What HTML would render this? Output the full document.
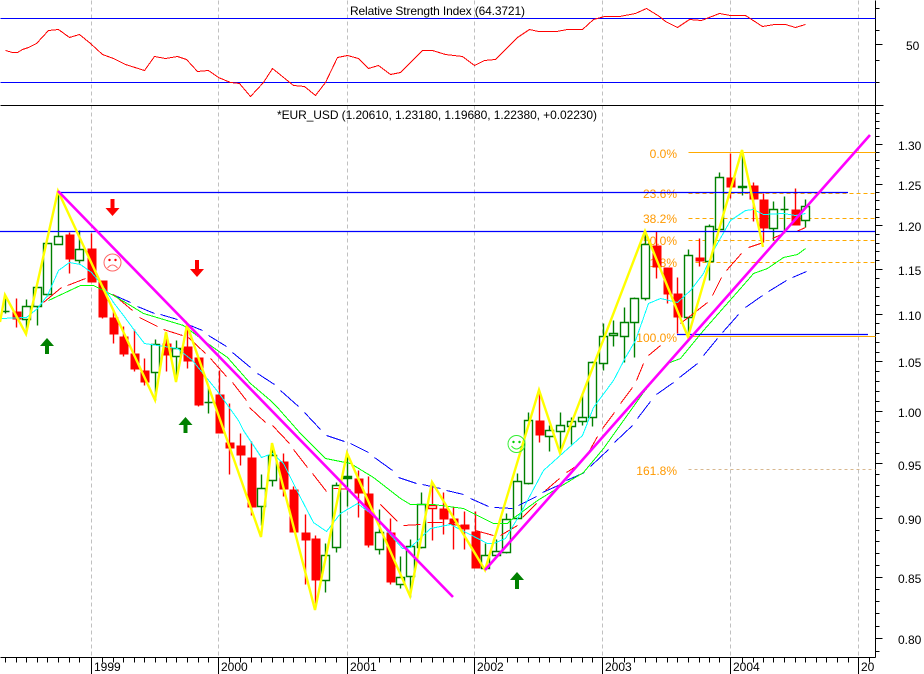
<!DOCTYPE html>
<html><head><meta charset="utf-8"><title>EUR_USD</title>
<style>
html,body{margin:0;padding:0;background:#fff;width:924px;height:674px;overflow:hidden}
svg{display:block;font-family:"Liberation Sans",Arial,sans-serif}
.c{shape-rendering:crispEdges;fill:none}
.k{fill:none}
text{font-size:12px;fill:#000}
.f text{fill:#f90;text-anchor:end}
</style></head><body>
<svg width="924" height="674" viewBox="0 0 924 674">
<rect width="924" height="674" fill="#fff"/>
<g class="c" transform="translate(.5,.5)">
<path stroke="#c0c0c0" stroke-dasharray="4 3" d="M91 0V657M218 0V657M347 0V657M474 0V657M602 0V657M730 0V657M858 0V657"/>
<path stroke="#000" d="M0 105H883M875 0V657M0 657H875"/>
<path stroke="#000" d="M875 8h4M875 30h4M875 44h7M875 60h4M875 82h4M875 113h4M875 121h4M875 128h4M875 136h4M875 144h7M875 152h4M875 160h4M875 168h4M875 176h4M875 184h7M875 192h4M875 200h4M875 209h4M875 217h4M875 225h7M875 234h4M875 243h4M875 251h4M875 260h4M875 269h7M875 278h4M875 287h4M875 296h4M875 305h4M875 314h7M875 323h4M875 333h4M875 342h4M875 352h4M875 361h7M875 371h4M875 381h4M875 391h4M875 401h4M875 411h7M875 421h4M875 432h4M875 442h4M875 453h4M875 463h7M875 474h4M875 485h4M875 496h4M875 507h4M875 518h7M875 530h4M875 541h4M875 553h4M875 565h4M875 577h7M875 589h4M875 601h4M875 613h4M875 626h4M875 638h7M875 651h4"/>
<path stroke="#000" d="M5 657v5M16 657v5M26 657v5M37 657v5M47 657v5M58 657v5M69 657v5M79 657v5M102 657v5M113 657v5M123 657v5M134 657v5M144 657v5M155 657v5M166 657v5M176 657v5M187 657v5M198 657v5M208 657v5M229 657v5M240 657v5M251 657v5M261 657v5M272 657v5M283 657v5M293 657v5M305 657v5M315 657v5M325 657v5M336 657v5M358 657v5M368 657v5M379 657v5M390 657v5M400 657v5M410 657v5M421 657v5M432 657v5M443 657v5M453 657v5M464 657v5M485 657v5M496 657v5M507 657v5M517 657v5M528 657v5M539 657v5M549 657v5M560 657v5M571 657v5M582 657v5M592 657v5M613 657v5M624 657v5M634 657v5M645 657v5M656 657v5M667 657v5M677 657v5M688 657v5M699 657v5M709 657v5M719 657v5M742 657v5M753 657v5M763 657v5M773 657v5M784 657v5M795 657v5M805 657v5M816 657v5M826 657v5M837 657v5M848 657v5M869 657v5M91 657V674M218 657V674M347 657V674M474 657V674M602 657V674M730 657V674M858 657V674"/>
<path stroke="#00f" d="M0 18H875M0 82H875"/>
<path stroke="#f00" d="M5 50L12 52L17 52L22 49L28 47L36 43L48 30L58 29L69 37L79 34L90 43L102 54L113 58L125 64L144 70L154 56L165 58L177 56L186 59L197 71L208 70L218 77L230 82L239 83L250 96L263 82L272 68L293 85L304 86L315 95L325 82L337 57L347 55L358 58L368 68L378 65L390 74L400 72L422 50L432 50L445 54L462 56L474 65L484 60L495 59L506 48L517 37L529 29L538 31L556 31L567 29L582 29L593 19L604 16L619 16L635 13L646 8L659 16L665 21L677 27L689 19L701 20L719 13L730 15L745 15L762 26L774 24L785 24L795 27L805 24"/>
</g>
<g class="f">
<text x="677" y="158">0.0%</text>
<text x="677" y="198">23.6%</text>
<text x="677" y="223">38.2%</text>
<text x="677" y="245">50.0%</text>
<text x="677" y="267">61.8%</text>
<text x="677" y="342">100.0%</text>
<text x="677" y="475">161.8%</text>
</g>
<g class="c" transform="translate(.5,.5)">
<path stroke="#fa0" d="M688 152H875M688 336H875"/>
<path stroke="#fa0" stroke-width="1.4" stroke-dasharray="4 3" d="M688 193H875M688 218H875M688 240H875M688 262H875"/>
<path stroke="#d8b890" stroke-dasharray="3 3" d="M688 469H875"/>
</g>
<g class="k" transform="translate(.5,.5)" stroke-width="1.4">
<path stroke="#f00" d="M16 298V327M69 232V273M91 233V282M102 280V318M113 311V343M123 326V356M134 329V371M144 358V385M166 333V371M187 327V368M198 357V406M219 370V433M229 403V474M240 433V465M251 441V515M283 453V496M293 486V532M305 514V584M315 535V603M358 470V517M368 476V547M390 518V584M432 482V540M443 492V534M453 506V549M464 511V549M475 511V568M539 390V442M656 231V278M667 267V303M677 277V333M699 238V266M730 153V198M753 182V221M763 193V242M795 188V225"/>
<path fill="#f00" stroke="none" d="M12 311h9v8h-9zM65 234h9v25h-9zM87 248h9v34h-9zM98 280h9v37h-9zM109 317h9v17h-9zM119 336h9v18h-9zM130 353h9v16h-9zM140 370h9v12h-9zM162 343h9v12h-9zM183 346h9v15h-9zM194 357h9v48h-9zM215 394h9v39h-9zM225 442h9v6h-9zM236 445h9v10h-9zM247 457h9v50h-9zM279 461h9v28h-9zM289 489h9v43h-9zM301 532h9v8h-9zM311 538h9v42h-9zM354 478h9v15h-9zM364 493h9v52h-9zM386 532h9v50h-9zM439 508h9v11h-9zM449 518h9v5h-9zM460 524h9v5h-9zM471 531h9v37h-9zM535 420h9v15h-9zM652 245h9v22h-9zM663 267h9v27h-9zM673 293h9v24h-9zM695 257h9v4h-9zM726 177h9v10h-9zM749 185h9v14h-9zM759 199h9v29h-9zM791 209h9v16h-9z"/>
<path stroke="#f00" fill="#fff" d="M428 505h8v3h-8z"/>
<path stroke="#008000" d="M5 295V313M26 299V333M37 287V325M47 243V296M58 193V244M79 230V263M155 339V400M176 340V377M208 387V413M261 474V525M272 445V486M325 543V592M336 482V552M347 455V506M379 509V554M400 556V588M410 539V597M421 492V548M485 543V570M496 539V557M506 513V553M517 473V518M528 412V484M549 425V451M560 412V453M571 417V444M582 394V425M592 361V426M603 323V370M613 320V346M624 307V362M634 297V357M645 231V300M688 249V337M709 224V280M719 172V229M742 150V195M773 201V240M784 196V233M805 199V227"/>
<path stroke="#008000" d="M1 311h8M204 402h8M780 209h8"/>
<path stroke="#008000" fill="#fff" d="M22 306h8v13h-8zM33 287h8v19h-8zM43 243h8v51h-8zM54 236h8v8h-8zM75 249h8v11h-8zM151 344h8v28h-8zM172 348h8v8h-8zM257 488h8v18h-8zM268 455h8v25h-8zM321 555h8v25h-8zM332 485h8v62h-8zM375 532h8v17h-8zM396 577h8v7h-8zM406 546h8v30h-8zM417 504h8v43h-8zM481 555h8v13h-8zM492 551h8v4h-8zM502 519h8v33h-8zM513 481h8v37h-8zM524 420h8v63h-8zM545 430h8v6h-8zM556 425h8v6h-8zM567 421h8v5h-8zM578 417h8v4h-8zM588 362h8v55h-8zM599 336h8v27h-8zM609 333h8v2h-8zM620 322h8v14h-8zM630 298h8v24h-8zM641 244h8v54h-8zM684 255h8v62h-8zM705 226h8v35h-8zM715 177h8v52h-8zM769 209h8v19h-8zM801 206h8v14h-8z"/>
<path fill="#008000" stroke="#008000" d="M343 476h8v2h-8zM738 186h8v1h-8z"/>
</g>
<g class="c" transform="translate(.5,.5)">
<path stroke="#00f" d="M112 294L130 302M137 306L154 313M160 314L177 319M185 323L202 330M208 335L226 346M232 352L250 367M257 373L274 384M280 390L298 406M304 412L320 429M326 435L344 441M350 443L368 452M374 457L392 470M398 477L416 483M422 484L440 488M446 490L463 494M470 498L488 506M494 507L512 508M518 505L536 496M542 492L560 484M566 480L584 472M590 466L608 449M614 442L632 425M637 418L650 401M656 394L673 382M679 377L697 363M703 355L717 338M722 332L738 314M745 307L762 295M768 291L786 280M792 277L806 271"/>
<path stroke="#f00" d="M43 302L61 287M67 285L85 278M113 294L132 310M139 317L157 326M163 329L182 335M188 337L205 353M210 358L226 376M232 382L246 400M249 407L265 422M272 425L289 443M293 449L307 467M312 473L326 491M333 488L350 489M380 504L397 521M403 525L420 524M427 522L442 522M448 523L468 527M475 530L493 535M500 535L517 525M522 517L536 503M545 490L559 478M566 472L580 463M588 452L597 436M602 428L614 412M620 403L632 387M636 380L643 363M648 355L660 345M680 323L707 302M712 295L721 277M726 270L741 253M748 247L763 242M772 238L783 233M796 231L805 227"/>
<path stroke="#0f0" d="M48 300L80 285L93 285L113 295L130 305L143 313L183 325L203 340L227 357L250 383L270 400L277 407L300 433L325 458L350 463L373 477L400 498L410 504L433 504L463 508L493 523L507 523L510 520L537 500L583 472L603 448L643 392L667 363L680 358L703 330L747 280L753 273L767 268L783 257L797 254L805 248"/>
<path stroke="#0ff" d="M0 318L26 317L37 308L47 295L58 270L69 262L80 264L91 272L102 285L113 302L123 315L134 330L144 343L177 348L192 360L218 392L238 420L243 430L261 457L272 453L283 463L300 497L313 522L326 531L340 513L357 503L373 515L402 548L410 547L430 528L450 524L487 543L493 543L505 538L520 513L543 470L582 435L593 407L613 380L625 357L635 340L648 303L660 298L677 302L690 290L703 273L713 250L730 220L745 210L753 209L763 214L783 213L795 215L805 213"/>
</g>
<g class="k" stroke="#00f" stroke-width="1.3"><path d="M58 192.500H848M0 231.500H875M677 334.500H868"/></g>
<g fill="none" stroke-linejoin="miter">
<path stroke="#ff0" stroke-width="2.4" d="M0 322L5 295L26 334L58 191L155 400L166 332L176 382L187 325L261 537L272 443L315 610L347 453L410 596L432 482L485 570L539 390L560 453L645 231L688 337L742 150L763 247"/>
<path stroke="#f0f" stroke-width="2.6" d="M58 191L453 597M485 570L870 135"/>
</g>
<path fill="#f00" d="M110.500 199h4v9h5l-7 8-7-8h5zM195 260h4v9h5l-7 8-7-8h5z"/>
<path fill="#008000" d="M47 338l7 8h-5v8h-4v-8h-5zM185.500 417l7 8h-5v8h-4v-8h-5zM517 572l7 8h-5v9h-4v-9h-5z"/>
<g fill="none">
<circle cx="112.500" cy="262.500" r="8.500" stroke="#f66"/>
<circle cx="109.500" cy="260" r="1.200" fill="#f00"/><circle cx="115.500" cy="260" r="1.200" fill="#f00"/>
<path stroke="#f66" d="M107.500 268Q112.500 262 117.500 268"/>
<circle cx="516.500" cy="444" r="8.500" stroke="#3e3"/>
<circle cx="513.500" cy="442" r="1.200" fill="#0c0"/><circle cx="519.500" cy="442" r="1.200" fill="#0c0"/>
<path stroke="#3e3" d="M511.500 446Q516.500 452 521.500 446"/>
</g>
<text x="350" y="15" textLength="175">Relative Strength Index (64.3721)</text>
<text x="277" y="119" textLength="320">*EUR_USD (1.20610, 1.23180, 1.19680, 1.22380, +0.02230)</text>
<text x="906" y="50">50</text>
<text x="898" y="150">1.30</text>
<text x="898" y="190">1.25</text>
<text x="898" y="231">1.20</text>
<text x="898" y="275">1.15</text>
<text x="898" y="320">1.10</text>
<text x="898" y="367">1.05</text>
<text x="898" y="417">1.00</text>
<text x="898" y="470">0.95</text>
<text x="898" y="524">0.90</text>
<text x="898" y="583">0.85</text>
<text x="898" y="644">0.80</text>
<text x="94" y="671">1999</text>
<text x="221" y="671">2000</text>
<text x="350" y="671">2001</text>
<text x="477" y="671">2002</text>
<text x="605" y="671">2003</text>
<text x="733" y="671">2004</text>
<text x="861" y="671">20</text>
</svg>
</body></html>
